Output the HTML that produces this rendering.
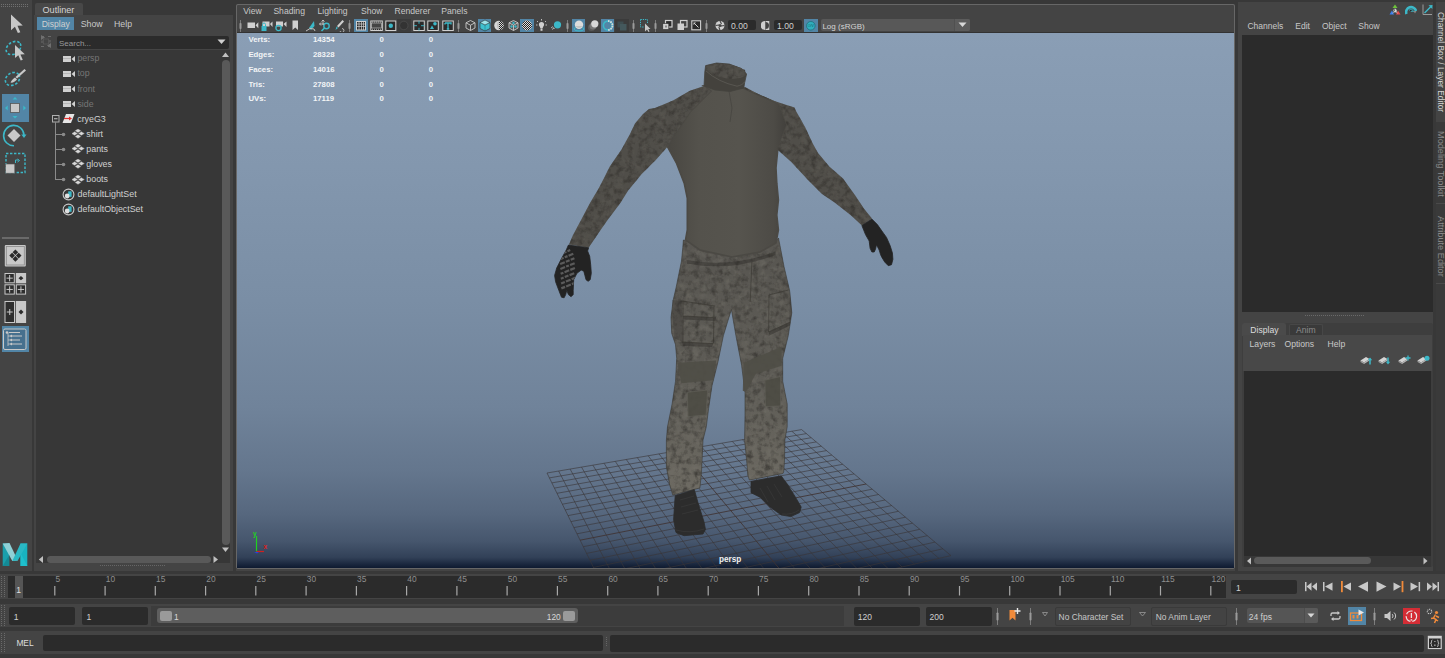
<!DOCTYPE html>
<html><head><meta charset="utf-8">
<style>
*{margin:0;padding:0;box-sizing:border-box}
html,body{width:1445px;height:658px;overflow:hidden;background:#444;font-family:"Liberation Sans",sans-serif;font-size:9px;color:#c8c8c8;position:relative}
.a{position:absolute}
.t{position:absolute;white-space:nowrap;line-height:1}
</style></head><body>
<div class="a" style="left:0px;top:0px;width:32px;height:571px;background:#444;"></div>
<div class="a" style="left:32px;top:0px;width:2px;height:574px;background:#383838;"></div>
<svg class="a" style="left:0px;top:3px;" width="32" height="6" viewBox="0 0 32 6"><rect x="1" y="1" width="1" height="1" fill="#707070"/><rect x="3" y="1" width="1" height="1" fill="#707070"/><rect x="5" y="1" width="1" height="1" fill="#707070"/><rect x="7" y="1" width="1" height="1" fill="#707070"/><rect x="9" y="1" width="1" height="1" fill="#707070"/><rect x="11" y="1" width="1" height="1" fill="#707070"/><rect x="13" y="1" width="1" height="1" fill="#707070"/><rect x="15" y="1" width="1" height="1" fill="#707070"/><rect x="17" y="1" width="1" height="1" fill="#707070"/><rect x="19" y="1" width="1" height="1" fill="#707070"/><rect x="21" y="1" width="1" height="1" fill="#707070"/><rect x="23" y="1" width="1" height="1" fill="#707070"/><rect x="25" y="1" width="1" height="1" fill="#707070"/><rect x="27" y="1" width="1" height="1" fill="#707070"/><rect x="1" y="3" width="1" height="1" fill="#707070"/><rect x="3" y="3" width="1" height="1" fill="#707070"/><rect x="5" y="3" width="1" height="1" fill="#707070"/><rect x="7" y="3" width="1" height="1" fill="#707070"/><rect x="9" y="3" width="1" height="1" fill="#707070"/><rect x="11" y="3" width="1" height="1" fill="#707070"/><rect x="13" y="3" width="1" height="1" fill="#707070"/><rect x="15" y="3" width="1" height="1" fill="#707070"/><rect x="17" y="3" width="1" height="1" fill="#707070"/><rect x="19" y="3" width="1" height="1" fill="#707070"/><rect x="21" y="3" width="1" height="1" fill="#707070"/><rect x="23" y="3" width="1" height="1" fill="#707070"/><rect x="25" y="3" width="1" height="1" fill="#707070"/><rect x="27" y="3" width="1" height="1" fill="#707070"/></svg>
<svg class="a" style="left:0px;top:10px;" width="32" height="28" viewBox="0 0 32 28"><path transform="translate(11,4.5) scale(0.98)" d="M0 0 L0 16 L4 12.5 L7 19 L9.5 18 L6.6 11.6 L12 11.2 Z" fill="#c8c8c8"/></svg>
<svg class="a" style="left:0px;top:38px;" width="32" height="28" viewBox="0 0 32 28"><ellipse cx="13.5" cy="10" rx="8" ry="5.8" transform="rotate(-35 13.5 10)" fill="none" stroke="#3cb8c8" stroke-width="1.6" stroke-dasharray="2.6 1.8"/><path transform="translate(15,7) scale(0.82)" d="M0 0 L0 16 L4 12.5 L7 19 L9.5 18 L6.6 11.6 L12 11.2 Z" fill="#c8c8c8"/></svg>
<svg class="a" style="left:0px;top:66px;" width="32" height="28" viewBox="0 0 32 28"><ellipse cx="12.5" cy="13" rx="7.6" ry="6" transform="rotate(-35 12.5 13)" fill="none" stroke="#3cb8c8" stroke-width="1.6" stroke-dasharray="2.6 1.8"/><path d="M24.5 3 L26 4.5 L17 12.5 L15.5 11 Z" fill="#c8c8c8"/><path d="M15 11.5 L17 13.5 C15 16 12.5 17 10.5 16.5 C11.5 14.5 13 12.5 15 11.5 Z" fill="#c8c8c8"/></svg>
<div class="a" style="left:2px;top:94px;width:27px;height:27.5px;background:#5285a6;"></div>
<svg class="a" style="left:0px;top:94px;" width="32" height="28" viewBox="0 0 32 28"><rect x="10.5" y="9.4" width="9" height="9" fill="#c8c8c8" stroke="#555" stroke-width="0.8"/><path d="M15 3 L17.5 5.6 L12.5 5.6Z M15 24.5 L17.5 22 L12.5 22Z M5 14 L7.7 11.5 L7.7 16.5Z M26 14 L23.3 11.5 L23.3 16.5Z" fill="#3cb8c8"/></svg>
<svg class="a" style="left:0px;top:122px;" width="32" height="28" viewBox="0 0 32 28"><path d="M24 13 A10.2 10.2 0 1 0 14 23.8" fill="none" stroke="#3cb8c8" stroke-width="1.6"/><path d="M21.3 12.5 L26.5 12.5 L24 16Z" fill="#3cb8c8"/><path d="M14 7 L20.5 13.5 L14 20 L7.5 13.5Z" fill="#c8c8c8"/></svg>
<svg class="a" style="left:0px;top:150px;" width="32" height="28" viewBox="0 0 32 28"><rect x="6" y="3.5" width="19" height="19" fill="none" stroke="#3cb8c8" stroke-width="1.4" stroke-dasharray="2.4 1.6"/><rect x="5.6" y="14" width="9.2" height="9.2" fill="#c8c8c8" stroke="#555" stroke-width="0.6"/><path d="M15.5 13 L15.5 10 L18.5 10 M17.5 9 L19.5 10.5 L17.5 12" fill="none" stroke="#3cb8c8" stroke-width="1"/></svg>
<div class="a" style="left:2px;top:237px;width:27px;height:2px;background:#6a6a6a;"></div>
<svg class="a" style="left:0px;top:244px;" width="32" height="24" viewBox="0 0 32 24"><rect x="4.8" y="1" width="21" height="21.5" rx="1" fill="#c8c8c8"/><rect x="6.3" y="2.5" width="18" height="18.5" fill="none" stroke="#888" stroke-width="0.8"/><path d="M15.4 5.5 L18.2 8.3 L15.4 11.1 L12.6 8.3Z M15.4 12.1 L18.2 14.9 L15.4 17.7 L12.6 14.9Z M12.1 8.8 L14.9 11.6 L12.1 14.4 L9.3 11.6Z M18.7 8.8 L21.5 11.6 L18.7 14.4 L15.9 11.6Z" fill="#2b2b2b"/></svg>
<svg class="a" style="left:0px;top:273px;" width="32" height="23" viewBox="0 0 32 23"><rect x="5.0" y="0.5" width="9.3" height="9.3" fill="#2e2e2e" stroke="#c8c8c8" stroke-width="1"/><path d="M9.65 2 V8.3 M6.5 5.15 H12.8" stroke="#c8c8c8" stroke-width="1"/><rect x="15.8" y="0" width="10.3" height="10.3" fill="#c8c8c8"/><path d="M20.950000000000003 3 L23.4 5.15 L20.950000000000003 7.3 L18.5 5.15Z" fill="#2b2b2b"/><rect x="5.0" y="11.8" width="9.3" height="9.3" fill="#2e2e2e" stroke="#c8c8c8" stroke-width="1"/><path d="M9.65 13.3 V19.6 M6.5 16.450000000000003 H12.8" stroke="#c8c8c8" stroke-width="1"/><rect x="16.3" y="11.8" width="9.3" height="9.3" fill="#2e2e2e" stroke="#c8c8c8" stroke-width="1"/><path d="M20.950000000000003 13.3 V19.6 M17.8 16.450000000000003 H24.1" stroke="#c8c8c8" stroke-width="1"/></svg>
<svg class="a" style="left:0px;top:301px;" width="32" height="23" viewBox="0 0 32 23"><rect x="5" y="0.5" width="9.5" height="21" fill="#2e2e2e" stroke="#c8c8c8" stroke-width="1"/><path d="M9.75 8 V14 M6.8 11 H12.7" stroke="#c8c8c8" stroke-width="1"/><rect x="15.8" y="0" width="10.3" height="22" fill="#c8c8c8"/><path d="M21 8.5 L23.5 11 L21 13.5 L18.5 11Z" fill="#2b2b2b"/></svg>
<div class="a" style="left:1.6px;top:326px;width:27px;height:25.5px;background:#5285a6;"></div>
<svg class="a" style="left:0px;top:326px;" width="32" height="26" viewBox="0 0 32 26"><rect x="3.5" y="3" width="22.5" height="20.5" rx="1.5" fill="#46708e" stroke="#c8c8c8" stroke-width="1"/><path d="M8 6.5 V20 M8 10 H11 M8 14 H11 M8 18 H11" stroke="#c8c8c8" stroke-width="0.8"/><circle cx="7" cy="6.5" r="1.3" fill="#c8c8c8"/><circle cx="11.5" cy="10" r="1.2" fill="#c8c8c8"/><circle cx="11.5" cy="14" r="1.2" fill="#c8c8c8"/><circle cx="11.5" cy="18" r="1.2" fill="#c8c8c8"/><path d="M9 6.5 H20 M13 10 H22 M13 14 H20 M13 18 H22" stroke="#c8c8c8" stroke-width="1.2"/></svg>
<svg class="a" style="left:0px;top:543px;" width="32" height="24" viewBox="0 0 32 24"><path d="M2.7 0.5 L9.2 0.5 L9.2 23 L2.7 23Z" fill="#1a9fab"/><path d="M2.7 0.5 L9.5 0 L17.8 17.5 L12.3 18 Z" fill="#8fd0d6"/><path d="M20.5 0.5 L27.3 0.5 L27.3 23 L20.5 23Z" fill="#18b3c0"/><path d="M27.3 0.5 L20.5 0.5 L12.3 18 L17.8 17.5Z" fill="#2ab8c4"/><path d="M2.7 23 L9.2 12 L9.2 23Z" fill="#148a95"/><path d="M27.3 23 L20.5 23 L20.5 10 Z" fill="#1fc0cc"/></svg>
<div class="a" style="left:34px;top:0px;width:199px;height:15px;background:#383838;"></div>
<div class="a" style="left:35px;top:3px;width:48px;height:12px;background:#484848;border-radius:2px 2px 0 0"></div>
<div class="t" style="left:42.5px;top:6.30px;font-size:9.1px;color:#d4d4d4;font-weight:normal;">Outliner</div>
<div class="a" style="left:34px;top:15px;width:199px;height:556px;background:#444;"></div>
<div class="a" style="left:37px;top:16.5px;width:37px;height:13.2px;background:#5285a6;"></div>
<div class="t" style="left:41.7px;top:19.76px;font-size:8.55px;color:#d0d0d0;font-weight:normal;">Display</div>
<div class="t" style="left:80.7px;top:19.55px;font-size:8.8px;color:#c8c8c8;font-weight:normal;">Show</div>
<div class="t" style="left:114px;top:19.59px;font-size:8.75px;color:#c8c8c8;font-weight:normal;">Help</div>
<svg class="a" style="left:39px;top:34px;" width="14" height="15" viewBox="0 0 14 15"><path d="M2 2.5 H5 M2 12.5 H5 M9 2.5 H12 M9 12.5 H12" stroke="#6a6a6a" stroke-width="1"/><path d="M2 1 L6 3.5 L2 6Z M12 9 L8 11.5 L12 14Z" fill="#6f6f6f"/><path d="M3 6.5 V9 M11 6 V8.5" stroke="#6a6a6a" stroke-width="1"/><rect x="4.5" y="5" width="5" height="5" fill="none" stroke="#5a5a5a" stroke-width="0.8"/></svg>
<div class="a" style="left:57px;top:35.5px;width:172px;height:13.4px;background:#2b2b2b;border-radius:2px"></div>
<div class="t" style="left:59px;top:39.53px;font-size:8.0px;color:#9a9a9a;font-weight:normal;">Search...</div>
<svg class="a" style="left:217px;top:39px;" width="9" height="6" viewBox="0 0 9 6"><path d="M0.5 0.5 L8.5 0.5 L4.5 5Z" fill="#d0d0d0"/></svg>
<div class="a" style="left:36px;top:50.3px;width:193.5px;height:512.5px;background:#373737;"></div>
<svg class="a" style="left:221px;top:51px;" width="10" height="8" viewBox="0 0 10 8"><path d="M1 6 L4.5 1.5 L8 6Z" fill="#c0c0c0"/></svg>
<div class="a" style="left:222px;top:60px;width:8px;height:484.5px;background:#595959;border-radius:4px"></div>
<svg class="a" style="left:221px;top:546px;" width="10" height="8" viewBox="0 0 10 8"><path d="M1 1.5 L8 1.5 L4.5 6Z" fill="#c0c0c0"/></svg>
<svg class="a" style="left:37px;top:555px;" width="8" height="9" viewBox="0 0 8 9"><path d="M6 1 L6 8 L1.8 4.5Z" fill="#c0c0c0"/></svg>
<div class="a" style="left:46.5px;top:556px;width:164.5px;height:7.3px;background:#595959;border-radius:4px"></div>
<svg class="a" style="left:212px;top:555px;" width="8" height="9" viewBox="0 0 8 9"><path d="M1.5 1 L1.5 8 L6 4.5Z" fill="#c0c0c0"/></svg>
<svg class="a" style="left:100px;top:565px;" width="66" height="2" viewBox="0 0 66 2"><rect x="0" y="0" width="1" height="1" fill="#666"/><rect x="2" y="0" width="1" height="1" fill="#666"/><rect x="4" y="0" width="1" height="1" fill="#666"/><rect x="6" y="0" width="1" height="1" fill="#666"/><rect x="8" y="0" width="1" height="1" fill="#666"/><rect x="10" y="0" width="1" height="1" fill="#666"/><rect x="12" y="0" width="1" height="1" fill="#666"/><rect x="14" y="0" width="1" height="1" fill="#666"/><rect x="16" y="0" width="1" height="1" fill="#666"/><rect x="18" y="0" width="1" height="1" fill="#666"/><rect x="20" y="0" width="1" height="1" fill="#666"/><rect x="22" y="0" width="1" height="1" fill="#666"/><rect x="24" y="0" width="1" height="1" fill="#666"/><rect x="26" y="0" width="1" height="1" fill="#666"/><rect x="28" y="0" width="1" height="1" fill="#666"/><rect x="30" y="0" width="1" height="1" fill="#666"/><rect x="32" y="0" width="1" height="1" fill="#666"/><rect x="34" y="0" width="1" height="1" fill="#666"/><rect x="36" y="0" width="1" height="1" fill="#666"/><rect x="38" y="0" width="1" height="1" fill="#666"/><rect x="40" y="0" width="1" height="1" fill="#666"/><rect x="42" y="0" width="1" height="1" fill="#666"/><rect x="44" y="0" width="1" height="1" fill="#666"/><rect x="46" y="0" width="1" height="1" fill="#666"/><rect x="48" y="0" width="1" height="1" fill="#666"/><rect x="50" y="0" width="1" height="1" fill="#666"/><rect x="52" y="0" width="1" height="1" fill="#666"/><rect x="54" y="0" width="1" height="1" fill="#666"/><rect x="56" y="0" width="1" height="1" fill="#666"/><rect x="58" y="0" width="1" height="1" fill="#666"/><rect x="60" y="0" width="1" height="1" fill="#666"/><rect x="62" y="0" width="1" height="1" fill="#666"/><rect x="64" y="0" width="1" height="1" fill="#666"/></svg>
<svg class="a" style="left:63px;top:54.5px;" width="13" height="8" viewBox="0 0 13 8"><rect x="0" y="1" width="8" height="6" fill="#d0d0d0"/><path d="M8.5 4 L12 1 L12 7Z" fill="#d0d0d0"/><path d="M0 3.5 H8" stroke="#9a9a9a" stroke-width="0.5"/></svg>
<div class="t" style="left:77.4px;top:54.35px;font-size:8.8px;color:#767676;font-weight:normal;">persp</div>
<svg class="a" style="left:63px;top:69.6px;" width="13" height="8" viewBox="0 0 13 8"><rect x="0" y="1" width="8" height="6" fill="#d0d0d0"/><path d="M8.5 4 L12 1 L12 7Z" fill="#d0d0d0"/><path d="M0 3.5 H8" stroke="#9a9a9a" stroke-width="0.5"/></svg>
<div class="t" style="left:77.4px;top:69.45px;font-size:8.8px;color:#767676;font-weight:normal;">top</div>
<svg class="a" style="left:63px;top:84.7px;" width="13" height="8" viewBox="0 0 13 8"><rect x="0" y="1" width="8" height="6" fill="#d0d0d0"/><path d="M8.5 4 L12 1 L12 7Z" fill="#d0d0d0"/><path d="M0 3.5 H8" stroke="#9a9a9a" stroke-width="0.5"/></svg>
<div class="t" style="left:77.4px;top:84.55px;font-size:8.8px;color:#767676;font-weight:normal;">front</div>
<svg class="a" style="left:63px;top:99.8px;" width="13" height="8" viewBox="0 0 13 8"><rect x="0" y="1" width="8" height="6" fill="#d0d0d0"/><path d="M8.5 4 L12 1 L12 7Z" fill="#d0d0d0"/><path d="M0 3.5 H8" stroke="#9a9a9a" stroke-width="0.5"/></svg>
<div class="t" style="left:77.4px;top:99.65px;font-size:8.8px;color:#767676;font-weight:normal;">side</div>
<svg class="a" style="left:51px;top:114px;" width="9" height="9" viewBox="0 0 9 9"><rect x="1.5" y="1.5" width="6.5" height="6.5" fill="none" stroke="#b0b0b0" stroke-width="1"/><path d="M3 4.75 H6.5" stroke="#c8c8c8" stroke-width="1"/></svg>
<svg class="a" style="left:62px;top:113px;" width="13" height="11" viewBox="0 0 13 11"><path d="M4 1 L12.5 1 L9 10 L0.5 10Z" fill="#e6e6e6"/><path d="M2 5.5 H8" stroke="#e03030" stroke-width="1.2"/><path d="M7 3.5 L10 5.5 L7 7.5Z" fill="#e03030"/></svg>
<div class="t" style="left:77.2px;top:114.67px;font-size:8.9px;color:#d0d0d0;font-weight:normal;">cryeG3</div>
<div class="a" style="left:55px;top:122px;width:1px;height:57px;background:#8a8a8a;"></div>
<div class="a" style="left:55px;top:134px;width:8px;height:1px;background:#8a8a8a;"></div>
<svg class="a" style="left:61px;top:131.5px;" width="5" height="5" viewBox="0 0 5 5"><circle cx="2.5" cy="2.5" r="1.8" fill="#8a8a8a"/></svg>
<svg class="a" style="left:71.5px;top:129.2px;" width="13" height="10" viewBox="0 0 13 10"><path d="M6 -0.19999999999999996 L9.2 1.8 L6 3.8 L2.8 1.8Z" fill="#d8d8d8" stroke="#555" stroke-width="0.4"/><path d="M2.6 2.5999999999999996 L5.800000000000001 4.6 L2.6 6.6 L-0.6000000000000001 4.6Z" fill="#d8d8d8" stroke="#555" stroke-width="0.4"/><path d="M9.4 2.5999999999999996 L12.600000000000001 4.6 L9.4 6.6 L6.2 4.6Z" fill="#d8d8d8" stroke="#555" stroke-width="0.4"/><path d="M6 5.4 L9.2 7.4 L6 9.4 L2.8 7.4Z" fill="#d8d8d8" stroke="#555" stroke-width="0.4"/></svg>
<div class="t" style="left:86.3px;top:129.77px;font-size:8.9px;color:#d0d0d0;font-weight:normal;">shirt</div>
<div class="a" style="left:55px;top:149px;width:8px;height:1px;background:#8a8a8a;"></div>
<svg class="a" style="left:61px;top:146.6px;" width="5" height="5" viewBox="0 0 5 5"><circle cx="2.5" cy="2.5" r="1.8" fill="#8a8a8a"/></svg>
<svg class="a" style="left:71.5px;top:144.29999999999998px;" width="13" height="10" viewBox="0 0 13 10"><path d="M6 -0.19999999999999996 L9.2 1.8 L6 3.8 L2.8 1.8Z" fill="#d8d8d8" stroke="#555" stroke-width="0.4"/><path d="M2.6 2.5999999999999996 L5.800000000000001 4.6 L2.6 6.6 L-0.6000000000000001 4.6Z" fill="#d8d8d8" stroke="#555" stroke-width="0.4"/><path d="M9.4 2.5999999999999996 L12.600000000000001 4.6 L9.4 6.6 L6.2 4.6Z" fill="#d8d8d8" stroke="#555" stroke-width="0.4"/><path d="M6 5.4 L9.2 7.4 L6 9.4 L2.8 7.4Z" fill="#d8d8d8" stroke="#555" stroke-width="0.4"/></svg>
<div class="t" style="left:86.3px;top:144.87px;font-size:8.9px;color:#d0d0d0;font-weight:normal;">pants</div>
<div class="a" style="left:55px;top:164px;width:8px;height:1px;background:#8a8a8a;"></div>
<svg class="a" style="left:61px;top:161.7px;" width="5" height="5" viewBox="0 0 5 5"><circle cx="2.5" cy="2.5" r="1.8" fill="#8a8a8a"/></svg>
<svg class="a" style="left:71.5px;top:159.39999999999998px;" width="13" height="10" viewBox="0 0 13 10"><path d="M6 -0.19999999999999996 L9.2 1.8 L6 3.8 L2.8 1.8Z" fill="#d8d8d8" stroke="#555" stroke-width="0.4"/><path d="M2.6 2.5999999999999996 L5.800000000000001 4.6 L2.6 6.6 L-0.6000000000000001 4.6Z" fill="#d8d8d8" stroke="#555" stroke-width="0.4"/><path d="M9.4 2.5999999999999996 L12.600000000000001 4.6 L9.4 6.6 L6.2 4.6Z" fill="#d8d8d8" stroke="#555" stroke-width="0.4"/><path d="M6 5.4 L9.2 7.4 L6 9.4 L2.8 7.4Z" fill="#d8d8d8" stroke="#555" stroke-width="0.4"/></svg>
<div class="t" style="left:86.3px;top:159.97px;font-size:8.9px;color:#d0d0d0;font-weight:normal;">gloves</div>
<div class="a" style="left:55px;top:179px;width:8px;height:1px;background:#8a8a8a;"></div>
<svg class="a" style="left:61px;top:176.8px;" width="5" height="5" viewBox="0 0 5 5"><circle cx="2.5" cy="2.5" r="1.8" fill="#8a8a8a"/></svg>
<svg class="a" style="left:71.5px;top:174.5px;" width="13" height="10" viewBox="0 0 13 10"><path d="M6 -0.19999999999999996 L9.2 1.8 L6 3.8 L2.8 1.8Z" fill="#d8d8d8" stroke="#555" stroke-width="0.4"/><path d="M2.6 2.5999999999999996 L5.800000000000001 4.6 L2.6 6.6 L-0.6000000000000001 4.6Z" fill="#d8d8d8" stroke="#555" stroke-width="0.4"/><path d="M9.4 2.5999999999999996 L12.600000000000001 4.6 L9.4 6.6 L6.2 4.6Z" fill="#d8d8d8" stroke="#555" stroke-width="0.4"/><path d="M6 5.4 L9.2 7.4 L6 9.4 L2.8 7.4Z" fill="#d8d8d8" stroke="#555" stroke-width="0.4"/></svg>
<div class="t" style="left:86.3px;top:175.07px;font-size:8.9px;color:#d0d0d0;font-weight:normal;">boots</div>
<svg class="a" style="left:62px;top:187.9px;" width="13" height="13" viewBox="0 0 13 13"><circle cx="6.5" cy="6.5" r="5.4" fill="none" stroke="#c8c8c8" stroke-width="1.1"/><path d="M6.2 3.3 H9.6 V8.8 H6.2Z" fill="#3ab8c8"/><circle cx="5.2" cy="8" r="2.4" fill="#e0e0e0"/></svg>
<div class="t" style="left:77.6px;top:190.20px;font-size:8.86px;color:#d0d0d0;font-weight:normal;">defaultLightSet</div>
<svg class="a" style="left:62px;top:203.0px;" width="13" height="13" viewBox="0 0 13 13"><circle cx="6.5" cy="6.5" r="5.4" fill="none" stroke="#c8c8c8" stroke-width="1.1"/><path d="M6.2 3.3 H9.6 V8.8 H6.2Z" fill="#3ab8c8"/><circle cx="5.2" cy="8" r="2.4" fill="#e0e0e0"/></svg>
<div class="t" style="left:77.6px;top:205.30px;font-size:8.86px;color:#d0d0d0;font-weight:normal;">defaultObjectSet</div>
<div class="a" style="left:233px;top:0px;width:3px;height:574px;background:#383838;"></div>
<div class="a" style="left:236px;top:0px;width:999px;height:3.5px;background:#383838;"></div>
<div class="a" style="left:236px;top:3.5px;width:999px;height:565px;background:#444;border:1px solid #676767;border-radius:2px"></div>
<div class="a" style="left:237px;top:31.8px;width:997px;height:1.2px;background:#333;"></div>
<div class="a" id="vp" style="left:237px;top:33px;width:997px;height:535px;background:linear-gradient(to bottom,rgb(138,158,181) 0%,rgb(131,151,174) 25%,rgb(122,142,165) 50%,rgb(112,131,154) 70%,rgb(100,118,141) 82%,rgb(86,103,126) 90%,rgb(70,86,109) 95%,rgb(50,65,88) 98%,rgb(14,26,48) 100%)"></div><svg class="a" style="left:0;top:0" width="1445" height="658" viewBox="0 0 1445 658">
<defs>
<clipPath id="vpc"><rect x="237" y="33" width="997" height="535"/></clipPath>
<filter id="camoP" x="-5%" y="-5%" width="110%" height="110%" color-interpolation-filters="sRGB">
 <feTurbulence type="fractalNoise" baseFrequency="0.17" numOctaves="3" seed="3" result="n1"/>
 <feColorMatrix in="n1" type="matrix" values="0 0 0 0 0.23  0 0 0 0 0.222  0 0 0 0 0.206  2.0 0 0 0 -0.88" result="dark"/>
 <feComposite in="dark" in2="SourceAlpha" operator="in" result="darkc"/>
 <feTurbulence type="fractalNoise" baseFrequency="0.12" numOctaves="3" seed="11" result="n2"/>
 <feColorMatrix in="n2" type="matrix" values="0 0 0 0 0.46  0 0 0 0 0.45  0 0 0 0 0.42  1.1 0 0 0 -0.5" result="light"/>
 <feComposite in="light" in2="SourceAlpha" operator="in" result="lightc"/>
 <feMerge><feMergeNode in="SourceGraphic"/><feMergeNode in="darkc"/><feMergeNode in="lightc"/></feMerge>
</filter>
<filter id="camoS" x="-5%" y="-5%" width="110%" height="110%" color-interpolation-filters="sRGB">
 <feTurbulence type="fractalNoise" baseFrequency="0.18" numOctaves="3" seed="5" result="n1"/>
 <feColorMatrix in="n1" type="matrix" values="0 0 0 0 0.20  0 0 0 0 0.19  0 0 0 0 0.175  1.7 0 0 0 -0.72" result="dark"/>
 <feComposite in="dark" in2="SourceAlpha" operator="in" result="darkc"/>
 <feTurbulence type="fractalNoise" baseFrequency="0.12" numOctaves="3" seed="17" result="n2"/>
 <feColorMatrix in="n2" type="matrix" values="0 0 0 0 0.40  0 0 0 0 0.39  0 0 0 0 0.36  0.9 0 0 0 -0.42" result="light"/>
 <feComposite in="light" in2="SourceAlpha" operator="in" result="lightc"/>
 <feMerge><feMergeNode in="SourceGraphic"/><feMergeNode in="darkc"/><feMergeNode in="lightc"/></feMerge>
</filter>
<linearGradient id="torsoG" x1="670" y1="0" x2="785" y2="0" gradientUnits="userSpaceOnUse">
 <stop offset="0" stop-color="#494742"/><stop offset="0.25" stop-color="#54524c"/><stop offset="0.6" stop-color="#56544e"/><stop offset="0.9" stop-color="#4d4b46"/><stop offset="1" stop-color="#43413d"/>
</linearGradient>
<linearGradient id="legG" x1="0" y1="250" x2="0" y2="495" gradientUnits="userSpaceOnUse">
 <stop offset="0" stop-color="#585651"/><stop offset="0.55" stop-color="#5e5c56"/><stop offset="1" stop-color="#6d6a62"/>
</linearGradient>
</defs>
<g clip-path="url(#vpc)">
<path d="M801.6 429.6L950.9 555.6M801.6 429.6L547.0 473.0M791.9 431.3L938.9 558.4M806.4 433.6L549.4 477.9M782.1 432.9L926.7 561.2M811.2 437.7L551.9 482.9M772.3 434.6L914.5 564.1M816.2 441.9L554.4 488.1M762.4 436.3L902.1 567.0M821.3 446.2L557.0 493.3M752.4 438.0L889.5 569.9M826.5 450.6L559.7 498.7M742.3 439.7L876.9 572.8M831.8 455.1L562.4 504.2M732.2 441.4L864.1 575.8M837.2 459.6L565.2 509.9M722.0 443.2L851.2 578.8M842.7 464.3L568.0 515.6M711.7 444.9L838.2 581.9M848.4 469.1L570.9 521.6M701.3 446.7L825.0 584.9M854.1 473.9L573.9 527.6M690.8 448.5L811.7 588.0M860.0 478.9L577.0 533.8M669.7 452.1L784.6 594.3M872.2 489.2L583.3 546.7M659.0 453.9L770.9 597.5M878.6 494.5L586.6 553.4M648.2 455.8L757.0 600.8M885.0 500.0L590.0 560.3M637.3 457.6L743.0 604.0M891.6 505.6L593.5 567.4M626.3 459.5L728.8 607.3M898.4 511.3L597.1 574.6M615.3 461.4L714.5 610.7M905.4 517.2L600.7 582.1M604.1 463.3L700.0 614.0M912.5 523.2L604.5 589.8M592.9 465.2L685.3 617.5M919.8 529.3L608.4 597.6M581.5 467.1L670.5 620.9M927.3 535.7L612.4 605.7M570.1 469.1L655.5 624.4M934.9 542.1L616.5 614.1M558.6 471.0L640.4 627.9M942.8 548.8L620.7 622.7M547.0 473.0L625.1 631.5M950.9 555.6L625.1 631.5" stroke="#3a3436" stroke-width="0.85" fill="none" opacity="0.72"/>
<path d="M680.3 450.3L798.2 591.2M866.1 484.0L580.1 540.2" stroke="#3f3331" stroke-width="1" fill="none" opacity="0.85"/>
<path d="M683.4,240.0 700.0,246.0 731.8,253.4 760.0,249.0 775.3,241.7 778.5,238.0 784.0,266.5 789.5,290.0 791.8,312.8 788.3,335.6 782.7,358.4 782.7,381.2 787.2,404.0 787.2,426.8 784.9,440.0 784.5,460.7 783.7,472.0 782.9,473.5 749.4,480.0 747.8,475.0 747.0,464.0 744.6,440.0 745.0,415.4 745.0,392.6 741.6,365.2 735.9,335.6 731.4,309.4 723.4,335.6 717.7,363.0 712.0,385.7 708.6,408.5 706.3,426.8 703.0,440.0 701.5,472.0 699.9,487.9 672.8,495.0 669.6,484.7 666.4,467.0 666.4,440.0 667.5,426.8 672.1,404.0 675.5,381.2 676.7,358.4 675.5,344.7 671.7,333.3 671.0,317.4 673.2,300.0 676.0,288.0 681.5,261.0 682.8,247.4Z" fill="url(#legG)" filter="url(#camoP)"/>
<path d="M683.4,240.0 700.0,246.0 731.8,253.4 760.0,249.0 775.3,241.7 778.5,238.0 784.0,266.5 789.5,290.0 791.8,312.8 788.3,335.6 782.7,358.4 782.7,381.2 787.2,404.0 787.2,426.8 784.9,440.0 784.5,460.7 783.7,472.0 782.9,473.5 749.4,480.0 747.8,475.0 747.0,464.0 744.6,440.0 745.0,415.4 745.0,392.6 741.6,365.2 735.9,335.6 731.4,309.4 723.4,335.6 717.7,363.0 712.0,385.7 708.6,408.5 706.3,426.8 703.0,440.0 701.5,472.0 699.9,487.9 672.8,495.0 669.6,484.7 666.4,467.0 666.4,440.0 667.5,426.8 672.1,404.0 675.5,381.2 676.7,358.4 675.5,344.7 671.7,333.3 671.0,317.4 673.2,300.0 676.0,288.0 681.5,261.0 682.8,247.4Z" fill="none" stroke="#3a3834" stroke-width="1" opacity="0.6"/>
<g fill="#2e2c29" opacity="0.45">
 <path d="M683 316 L716 317.7 L715.5 321 L683.5 319.5Z"/>
 <path d="M681.7 342 L713.5 343.6 L712 347 L683 346Z"/>
 <path d="M768.6 332 L790.3 322 L790 325.5 L769.5 335.5Z"/>
 <path d="M686.7 260 Q731 268 775.3 251.7 L775.6 255 Q731 272 687 263.5Z"/>
 <path d="M672 300 L681.7 301 L683 342 L674 338 Z" opacity="0.6"/>
 <path d="M790.5 290 L791.8 312.8 L789 325 Z" opacity="0.6"/>
</g>
<g fill="none" stroke="#34322d" stroke-width="0.9" opacity="0.6">
 <path d="M681.7 301 L715.1 306 M683.4 316 L716 317.7 M681.7 342 L713.5 343.6 M683 301 L683 342 M714 306 L713.5 343"/>
 <path d="M768.6 295 L788.6 290 M768.6 332 L790.3 322 M769 295 L768.6 332"/>
 <path d="M751.9 262 L750.2 301.8"/>
</g>
<path d="M677.5,362.7 716.2,360.4 713.2,380.2 681.3,383.2Z" fill="#4f4e46" opacity="0.92"/>
<path d="M743.6,362.7 781.6,346.7 781.6,365.7 755.7,374.0 746.0,392.0 742.8,390.8Z" fill="#4f4e46" opacity="0.92"/>
<path d="M687.4,392.3 707.6,390.0 706.1,415.1 688.0,416.6Z" fill="#4d4c44" stroke="#5e5d55" stroke-width="0.8" opacity="0.9"/>
<path d="M764.9,380.2 780.5,376.5 780.5,406.0 765.5,406.5Z" fill="#4d4c44" stroke="#5e5d55" stroke-width="0.8" opacity="0.9"/>
<path d="M675.2,495.8 694.3,489.5 698.3,503.8 703.9,521.4 705.5,529.4 703.0,534.0 684.0,535.7 676.0,532.5 673.6,519.8 674.4,507.0Z" fill="#2c2c2c" stroke="#2c2c2c" stroke-width="0.8"/>
<path d="M751.0,481.5 781.3,476.0 787.7,484.7 795.6,497.4 801.2,507.0 799.6,512.6 790.8,516.6 781.3,515.0 770.0,507.0 760.5,497.4 751.0,492.7Z" fill="#2c2c2c" stroke="#2c2c2c" stroke-width="0.8"/>
<g fill="none" stroke="#444" stroke-width="0.9" opacity="0.45">
 <path d="M676 530 Q690 534 704 529"/><path d="M680 500 L694 496 M681 507 L696 503 M682 514 L698 510"/>
 <path d="M782 514 Q792 515 799 510"/><path d="M760 488 L768 502 M767 486 L775 500 M774 484 L782 497"/>
</g>
<path d="M704.0,86.0 711.0,91.0 690.0,112.0 671.0,140.0 667.5,146.7 676.6,163.4 684.2,183.2 687.3,198.4 687.3,230.0 685.5,240.0 700.0,250.0 732.0,257.0 760.0,252.0 776.0,243.0 778.4,230.0 776.8,215.0 778.4,200.0 776.8,183.2 776.0,168.0 777.6,151.3 781.0,140.0 787.0,125.0 779.0,104.0 742.8,88.0 743.8,88.0Z" fill="url(#torsoG)" stroke="#4b4944" stroke-width="1.6"/>
<path d="M711.0,91.0 704.0,86.0 690.0,90.7 673.0,100.6 655.0,108.0 649.0,109.0 643.0,114.0 635.0,123.4 630.0,134.0 621.5,149.5 609.8,166.5 599.1,187.8 590.0,203.0 580.0,222.0 573.0,235.0 569.0,244.5 588.6,247.8 600.6,230.0 606.7,221.2 620.4,203.0 628.0,190.8 641.7,174.0 655.3,160.4 667.5,146.7 671.0,140.0 690.0,112.0Z" fill="#504e49" filter="url(#camoS)"/>
<path d="M742.8,88.0 745.0,87.0 758.0,94.0 773.0,100.6 785.0,104.4 794.5,107.4 796.0,111.0 805.0,127.0 813.0,144.0 818.0,153.0 829.3,166.5 843.0,178.6 855.1,195.3 864.2,209.0 872.0,218.5 861.9,225.5 850.5,215.1 835.3,203.0 821.7,193.8 808.0,180.0 791.3,161.9 777.6,149.8 781.0,140.0 787.0,125.0 779.0,104.0Z" fill="#504e49" filter="url(#camoS)"/>
<path d="M705.6,65.6 716.6,63.0 729.5,64.1 741.7,68.7 746.6,74.0 744.7,82.4 743.8,88.0 730.0,91.5 715.0,90.0 704.0,86.0 704.8,72.0Z" fill="#44423d" stroke="#44423d" stroke-width="0.8"/><path d="M706 66 Q725 60 745 70 L746 76 Q730 84 706 71Z" fill="#504e49" filter="url(#camoS)"/>
<path d="M706 71 Q718 82 737 86.2 Q743 85 744.7 81.6" fill="none" stroke="#5a5852" stroke-width="0.9"/>
<path d="M729 91 L732 108 L730 122" fill="none" stroke="#45433e" stroke-width="1" opacity="0.7"/>
<path d="M568.4,245.1 588.6,247.8 587.6,251.0 589.7,256.3 590.7,264.8 591.3,273.3 590.2,279.7 588.1,281.3 586.0,279.7 584.9,275.4 583.8,271.2 581.2,270.1 576.9,273.3 573.7,279.7 573.2,290.3 573.2,294.6 571.1,296.7 568.4,294.6 566.8,290.3 565.7,294.6 564.1,297.8 561.5,297.2 558.8,290.3 555.6,281.8 554.6,275.4 556.7,268.0 561.0,259.5 566.3,249.9Z" fill="#232323" stroke="#232323" stroke-width="0.8"/>
<clipPath id="lgc"><path d="M568.4,245.1 588.6,247.8 587.6,251.0 589.7,256.3 590.7,264.8 591.3,273.3 590.2,279.7 588.1,281.3 586.0,279.7 584.9,275.4 583.8,271.2 581.2,270.1 576.9,273.3 573.7,279.7 573.2,290.3 573.2,294.6 571.1,296.7 568.4,294.6 566.8,290.3 565.7,294.6 564.1,297.8 561.5,297.2 558.8,290.3 555.6,281.8 554.6,275.4 556.7,268.0 561.0,259.5 566.3,249.9Z"/></clipPath>
<g fill="#6a6a6a" opacity="0.8" clip-path="url(#lgc)"><g transform="rotate(-22 566 270)"><rect x="566.0" y="252.0" width="3" height="2.2"/><rect x="570.2" y="252.0" width="3" height="2.2"/><rect x="574.4" y="252.0" width="3" height="2.2"/><rect x="564.4" y="256.6" width="4" height="2.2"/><rect x="569.6" y="256.6" width="3" height="2.2"/><rect x="573.8" y="256.6" width="5" height="2.2"/><rect x="562.8" y="261.2" width="5" height="2.2"/><rect x="569.0" y="261.2" width="4" height="2.2"/><rect x="574.2" y="261.2" width="4" height="2.2"/><rect x="561.2" y="265.8" width="5" height="2.2"/><rect x="567.4" y="265.8" width="3" height="2.2"/><rect x="571.6" y="265.8" width="5" height="2.2"/><rect x="559.6" y="270.4" width="3" height="2.2"/><rect x="563.8" y="270.4" width="5" height="2.2"/><rect x="570.0" y="270.4" width="5" height="2.2"/><rect x="558.0" y="275.0" width="3" height="2.2"/><rect x="562.2" y="275.0" width="4" height="2.2"/><rect x="567.4" y="275.0" width="5" height="2.2"/><rect x="556.4" y="279.6" width="4" height="2.2"/><rect x="561.6" y="279.6" width="5" height="2.2"/><rect x="567.8" y="279.6" width="5" height="2.2"/><rect x="554.8" y="284.2" width="4" height="2.2"/><rect x="560.0" y="284.2" width="5" height="2.2"/><rect x="566.2" y="284.2" width="4" height="2.2"/></g></g>
<path d="M861.9,225.5 871.9,219.1 877.4,224.6 881.9,231.0 886.5,237.4 890.1,245.6 892.4,252.9 892.9,259.3 891.5,264.7 888.3,265.7 884.7,262.0 881.9,257.4 880.6,254.7 879.2,250.1 876.5,244.7 875.5,249.2 874.2,252.0 871.9,252.0 870.1,248.3 869.2,241.0 865.5,234.6 863.7,230.1Z" fill="#232323" stroke="#232323" stroke-width="0.8"/>
</g>
</svg>
<div class="t" style="left:243.3px;top:6.92px;font-size:8.6px;color:#c8c8c8;font-weight:normal;">View</div>
<div class="t" style="left:273.4px;top:6.92px;font-size:8.6px;color:#c8c8c8;font-weight:normal;">Shading</div>
<div class="t" style="left:317.5px;top:6.92px;font-size:8.6px;color:#c8c8c8;font-weight:normal;">Lighting</div>
<div class="t" style="left:361px;top:6.92px;font-size:8.6px;color:#c8c8c8;font-weight:normal;">Show</div>
<div class="t" style="left:394.5px;top:6.92px;font-size:8.6px;color:#c8c8c8;font-weight:normal;">Renderer</div>
<div class="t" style="left:441.3px;top:6.92px;font-size:8.6px;color:#c8c8c8;font-weight:normal;">Panels</div>
<svg class="a" style="left:238px;top:19.5px;" width="4" height="13" viewBox="0 0 4 13"><rect x="2" y="0" width="1" height="12" fill="#7c7c7c"/><rect x="1.5" y="3" width="2" height="6" rx="0.8" fill="#9a9a9a"/></svg>
<svg class="a" style="left:246.5px;top:19px;" width="14" height="13" viewBox="0 0 14 13"><rect x="0.5" y="3.5" width="7.5" height="5.5" fill="#d0d0d0"/><path d="M8.5 6.2 L11.3 3.3 L11.3 9.2Z" fill="#d0d0d0"/></svg>
<svg class="a" style="left:260.5px;top:19px;" width="14" height="13" viewBox="0 0 14 13"><rect x="1.5" y="2.5" width="7" height="5" fill="#d0d0d0"/><path d="M9 5 L11.5 2.5 L11.5 8Z" fill="#d0d0d0"/><rect x="0.5" y="7" width="5" height="5" fill="#3cb8c8"/><path d="M1.5 7 V5.5 A1.5 1.5 0 0 1 4.5 5.5 V7" fill="none" stroke="#3cb8c8" stroke-width="1"/></svg>
<svg class="a" style="left:275px;top:19px;" width="14" height="13" viewBox="0 0 14 13"><rect x="1" y="2.5" width="7" height="5" fill="#d0d0d0"/><path d="M8.5 5 L11.5 2.5 L11.5 8Z" fill="#d0d0d0"/><circle cx="3.5" cy="9" r="2.6" fill="none" stroke="#3cb8c8" stroke-width="1.4"/></svg>
<svg class="a" style="left:292px;top:19px;" width="14" height="13" viewBox="0 0 14 13"><path d="M0.5 1.5 H6 V11 L3.25 8.5 L0.5 11Z" fill="#d0d0d0"/></svg>
<svg class="a" style="left:305px;top:19px;" width="14" height="13" viewBox="0 0 14 13"><path d="M4 9 L9 2 L9.5 7 L6 11Z" fill="#3cb8c8"/><path d="M1 12 L5 9.5 L9 10 L10 12" fill="none" stroke="#c0c0c0" stroke-width="1"/></svg>
<svg class="a" style="left:318.5px;top:19px;" width="14" height="13" viewBox="0 0 14 13"><circle cx="7.5" cy="7" r="2.7" fill="none" stroke="#3cb8c8" stroke-width="1.4"/><path d="M5.5 9 L2.5 12" stroke="#3cb8c8" stroke-width="1.6"/><path d="M0.5 5 H5 M4 1.5 V6 M2 3.5 L0.5 5 L2 6.5 M2.5 2.5 L4 1 L5.5 2.5" fill="none" stroke="#c8c8c8" stroke-width="0.9"/></svg>
<svg class="a" style="left:334px;top:19px;" width="14" height="13" viewBox="0 0 14 13"><path d="M8.5 1 L10 2.5 L4.5 8.5 L3 7Z" fill="#d0d0d0"/><path d="M2.5 7.5 L4 9 L1.5 11Z" fill="#3cb8c8"/><path d="M6 12 A2 2 0 1 0 8 9.5" fill="none" stroke="#c0c0c0" stroke-width="0.9"/></svg>
<svg class="a" style="left:347px;top:19.5px;" width="4" height="13" viewBox="0 0 4 13"><rect x="2" y="0" width="1" height="12" fill="#7c7c7c"/><rect x="1.5" y="3" width="2" height="6" rx="0.8" fill="#9a9a9a"/></svg>
<div class="a" style="left:354.4px;top:19px;width:13.5px;height:13.1px;background:#5285a6;"></div>
<svg class="a" style="left:354.2px;top:19px;" width="14" height="13" viewBox="0 0 14 13"><rect x="2.5" y="2.5" width="9" height="8.5" fill="#2b2b2b" stroke="#d0d0d0" stroke-width="1"/><path d="M2.5 5 H11.5 M2.5 7.5 H11.5 M5 2.5 V11 M7.5 2.5 V11 M9.5 2.5 V11" stroke="#d0d0d0" stroke-width="0.7"/></svg>
<svg class="a" style="left:369.5px;top:19px;" width="14" height="13" viewBox="0 0 14 13"><rect x="0.8" y="2" width="11.5" height="9.5" fill="#2b2b2b" stroke="#d0d0d0" stroke-width="1"/><rect x="1.5" y="4" width="10" height="5" fill="#444" stroke="#d0d0d0" stroke-width="0.6"/><path d="M2 3 H11 M2 10.3 H11" stroke="#d0d0d0" stroke-width="0.7" stroke-dasharray="1 1"/></svg>
<svg class="a" style="left:384.5px;top:19px;" width="14" height="13" viewBox="0 0 14 13"><rect x="0.8" y="2" width="10" height="9.5" fill="#2b2b2b" stroke="#d0d0d0" stroke-width="1"/><circle cx="5.8" cy="6.7" r="2.2" fill="#3cb8c8"/></svg>
<div class="a" style="left:397px;top:19px;width:13.6px;height:13px;background:#3b3b3b;"></div>
<svg class="a" style="left:397px;top:19px;" width="14" height="13" viewBox="0 0 14 13"><circle cx="6.8" cy="6.5" r="3.6" fill="#333"/><circle cx="6.8" cy="6.5" r="4.3" fill="none" stroke="#4a4a4a" stroke-width="0.8"/></svg>
<svg class="a" style="left:413px;top:19px;" width="14" height="13" viewBox="0 0 14 13"><rect x="0.8" y="2" width="10.5" height="9.5" fill="#2b2b2b" stroke="#d0d0d0" stroke-width="1"/><path d="M6 2 V11.5 M0.8 6.7 H11.3" stroke="#3cb8c8" stroke-width="0.9"/><rect x="4" y="4.8" width="4" height="4" fill="#2b2b2b"/></svg>
<svg class="a" style="left:427px;top:19px;" width="14" height="13" viewBox="0 0 14 13"><rect x="0.8" y="2" width="10.5" height="9.5" fill="#2b2b2b" stroke="#d0d0d0" stroke-width="1"/><path d="M3 10 L5 6.5 L7 10Z" fill="#3cb8c8"/><circle cx="8" cy="4.8" r="1.8" fill="#3cb8c8"/></svg>
<svg class="a" style="left:442px;top:19px;" width="14" height="13" viewBox="0 0 14 13"><rect x="0.8" y="2" width="10.5" height="9.5" fill="#2b2b2b" stroke="#d0d0d0" stroke-width="1"/><path d="M3 4 H9 V5.5 M3 4 V5.5 M6 4 V10 M4.8 10 H7.2" fill="none" stroke="#3cb8c8" stroke-width="1.3"/></svg>
<svg class="a" style="left:456px;top:19.5px;" width="4" height="13" viewBox="0 0 4 13"><rect x="2" y="0" width="1" height="12" fill="#7c7c7c"/><rect x="1.5" y="3" width="2" height="6" rx="0.8" fill="#9a9a9a"/></svg>
<svg class="a" style="left:464.5px;top:19px;" width="14" height="13" viewBox="0 0 14 13"><path d="M5.5 1.5 L10 3.8 L10 9 L5.5 11.5 L1 9 L1 3.8Z M1 3.8 L5.5 6.2 L10 3.8 M5.5 6.2 V11.5" fill="none" stroke="#c8c8c8" stroke-width="0.9"/></svg>
<div class="a" style="left:477.5px;top:19px;width:13.5px;height:13.1px;background:#5285a6;"></div>
<svg class="a" style="left:478.5px;top:19px;" width="14" height="13" viewBox="0 0 14 13"><path d="M6 1 L11 3.5 L11 9.5 L6 12 L1 9.5 L1 3.5Z" fill="#3fc0cf"/><path d="M1 3.5 L6 6 L11 3.5 L6 1Z" fill="#9fe3ea"/><path d="M6 6 V12" stroke="#2a8d99" stroke-width="0.8"/><path d="M6 1 L11 3.5 L11 9.5 L6 12 L1 9.5 L1 3.5Z M1 3.5 L6 6 L11 3.5" fill="none" stroke="#2b2b2b" stroke-width="0.6"/></svg>
<svg class="a" style="left:494px;top:19px;" width="14" height="13" viewBox="0 0 14 13"><defs><pattern id="chk" width="2" height="2" patternUnits="userSpaceOnUse"><rect width="1" height="1" fill="#222"/><rect x="1" y="1" width="1" height="1" fill="#222"/></pattern></defs><circle cx="5" cy="6.5" r="4.8" fill="#d8d8d8"/><path d="M5 1.7 A4.8 4.8 0 0 1 5 11.3Z" fill="url(#chk)"/><path d="M5 1.7 A4.8 4.8 0 0 0 3 6.5 A4.8 4.8 0 0 0 5 11.3" fill="#aaa" opacity="0.5"/></svg>
<svg class="a" style="left:507.5px;top:19px;" width="14" height="13" viewBox="0 0 14 13"><path d="M5.5 1.5 L10 3.8 L10 9 L5.5 11.5 L1 9 L1 3.8Z" fill="#555" stroke="#c8c8c8" stroke-width="0.9"/><path d="M1 3.8 L5.5 6.2 L10 3.8 M5.5 6.2 V11.5" fill="none" stroke="#c8c8c8" stroke-width="0.9"/><circle cx="3.5" cy="7.5" r="1.2" fill="#3cb8c8"/><circle cx="7.5" cy="7.5" r="1.2" fill="#3cb8c8"/><circle cx="5.5" cy="4" r="1.2" fill="#3cb8c8"/></svg>
<div class="a" style="left:520.2px;top:19px;width:14.0px;height:13.1px;background:#5285a6;"></div>
<svg class="a" style="left:520.2px;top:19px;" width="14" height="13" viewBox="0 0 14 13"><circle cx="7" cy="6.5" r="5" fill="#e0e0e0"/><circle cx="7" cy="6.5" r="5" fill="url(#chk)"/></svg>
<svg class="a" style="left:536px;top:19px;" width="14" height="13" viewBox="0 0 14 13"><path d="M5.5 3 A2.6 2.6 0 0 1 8.1 5.6 C8.1 7 7 7.5 6.7 9 H4.3 C4 7.5 2.9 7 2.9 5.6 A2.6 2.6 0 0 1 5.5 3Z" fill="#d0d0d0"/><rect x="4.5" y="9.3" width="2" height="2.5" fill="#d0d0d0"/><path d="M5.5 0 V1.5 M1 2 L2 3 M10 2 L9 3 M0 6 H1.5 M9.5 6 H11" stroke="#c8c8c8" stroke-width="0.9"/></svg>
<svg class="a" style="left:550px;top:19px;" width="14" height="13" viewBox="0 0 14 13"><circle cx="7.5" cy="5.8" r="3.6" fill="#3cb8c8"/><path d="M1 9 L3 7.5 M2 10.5 L4 9 M3.5 8.5 L4.5 10" stroke="#c8c8c8" stroke-width="0.8"/></svg>
<svg class="a" style="left:565px;top:19.5px;" width="4" height="13" viewBox="0 0 4 13"><rect x="2" y="0" width="1" height="12" fill="#7c7c7c"/><rect x="1.5" y="3" width="2" height="6" rx="0.8" fill="#9a9a9a"/></svg>
<div class="a" style="left:571.8px;top:19px;width:13.6px;height:13.1px;background:#5285a6;"></div>
<svg class="a" style="left:571.8px;top:19px;" width="14" height="13" viewBox="0 0 14 13"><ellipse cx="7" cy="10" rx="5" ry="2" fill="none" stroke="#3cb8c8" stroke-width="1"/><circle cx="7" cy="5.8" r="4.2" fill="#dcdcdc"/><path d="M3.5 7.5 Q7 9.5 10.5 7.5" fill="#a8a8a8"/></svg>
<svg class="a" style="left:587px;top:19px;" width="14" height="13" viewBox="0 0 14 13"><circle cx="4.5" cy="8.5" r="3.5" fill="#5a5a5a"/><circle cx="6" cy="7" r="3.5" fill="#777"/><circle cx="7.8" cy="4.8" r="3.6" fill="#d8d8d8"/></svg>
<div class="a" style="left:600.5px;top:19px;width:13.5px;height:13.1px;background:#5285a6;"></div>
<svg class="a" style="left:600.5px;top:19px;" width="14" height="13" viewBox="0 0 14 13"><circle cx="6.8" cy="6.5" r="4.4" fill="none" stroke="#3cb8c8" stroke-width="1.6"/><path d="M7 2 A4.5 4.5 0 0 1 7 11" fill="none" stroke="#d8d8d8" stroke-width="1.8" stroke-dasharray="1.6 0.8"/></svg>
<div class="a" style="left:615px;top:19px;width:13.6px;height:13px;background:#3b3b3b;"></div>
<svg class="a" style="left:615px;top:19px;" width="14" height="13" viewBox="0 0 14 13"><rect x="2.5" y="2.5" width="6" height="6" fill="#3e4d50"/><rect x="5" y="5" width="6.5" height="6.5" fill="#44585c"/></svg>
<svg class="a" style="left:631px;top:19.5px;" width="4" height="13" viewBox="0 0 4 13"><rect x="2" y="0" width="1" height="12" fill="#7c7c7c"/><rect x="1.5" y="3" width="2" height="6" rx="0.8" fill="#9a9a9a"/></svg>
<svg class="a" style="left:639.6px;top:19px;" width="14" height="13" viewBox="0 0 14 13"><path d="M0.5 0.5 H7.5 V4 M0.5 0.5 V8 H4" fill="none" stroke="#3cb8c8" stroke-width="1" stroke-dasharray="1.3 1"/><path d="M5 4.5 L5 12.5 L7 10.5 L8.5 13 L9.5 12.5 L8.3 10 L10.5 10 Z" fill="#c8c8c8"/></svg>
<svg class="a" style="left:653px;top:19.5px;" width="4" height="13" viewBox="0 0 4 13"><rect x="2" y="0" width="1" height="12" fill="#7c7c7c"/><rect x="1.5" y="3" width="2" height="6" rx="0.8" fill="#9a9a9a"/></svg>
<svg class="a" style="left:661.5px;top:19px;" width="14" height="13" viewBox="0 0 14 13"><rect x="3.5" y="1.5" width="6.5" height="6.5" fill="#2b2b2b" stroke="#d0d0d0" stroke-width="1.2"/><rect x="0.8" y="4.5" width="6" height="6" fill="#d0d0d0" stroke="#2b2b2b" stroke-width="0.6"/><rect x="3" y="6.5" width="2" height="2" fill="#888"/></svg>
<svg class="a" style="left:676.5px;top:19px;" width="14" height="13" viewBox="0 0 14 13"><rect x="3.5" y="1.5" width="6.5" height="6.5" fill="none" stroke="#d0d0d0" stroke-width="1.2"/><rect x="0.5" y="4.5" width="6.5" height="6.5" fill="#d0d0d0"/></svg>
<svg class="a" style="left:691px;top:19px;" width="14" height="13" viewBox="0 0 14 13"><rect x="0.8" y="1.8" width="8.8" height="9" fill="#2b2b2b" stroke="#d0d0d0" stroke-width="1.1"/><path d="M3 4 L7.5 8.5" stroke="#d0d0d0" stroke-width="1"/><path d="M2.5 3.5 H5 L2.5 6Z" fill="#d0d0d0"/></svg>
<svg class="a" style="left:704px;top:19.5px;" width="4" height="13" viewBox="0 0 4 13"><rect x="2" y="0" width="1" height="12" fill="#7c7c7c"/><rect x="1.5" y="3" width="2" height="6" rx="0.8" fill="#9a9a9a"/></svg>
<svg class="a" style="left:714.5px;top:19px;" width="14" height="13" viewBox="0 0 14 13"><circle cx="5" cy="6.5" r="4.5" fill="#d0d0d0"/><path d="M5 2 L6.5 5 M9.5 6.5 L6 7 M5 11 L3.8 8 M0.5 6.5 L4 6" stroke="#444" stroke-width="1.1"/><circle cx="5" cy="6.5" r="1.5" fill="#444"/></svg>
<div class="a" style="left:727.7px;top:20px;width:28px;height:9.7px;background:#2b2b2b;border-radius:2px"></div>
<div class="t" style="left:731px;top:21.92px;font-size:8.6px;color:#d0d0d0;font-weight:normal;">0.00</div>
<svg class="a" style="left:761px;top:19px;" width="14" height="13" viewBox="0 0 14 13"><path d="M4 2 A4.5 4.5 0 0 0 4 11Z" fill="#d0d0d0"/><rect x="4.5" y="2" width="3.8" height="9" fill="#d0d0d0"/><path d="M4.5 3 A3.5 3.5 0 0 1 4.5 10Z" fill="#444"/></svg>
<div class="a" style="left:773.9px;top:20px;width:28px;height:9.7px;background:#2b2b2b;border-radius:2px"></div>
<div class="t" style="left:777px;top:21.92px;font-size:8.6px;color:#d0d0d0;font-weight:normal;">1.00</div>
<div class="a" style="left:804.4px;top:18.7px;width:13.6px;height:13.7px;background:#5285a6;"></div>
<svg class="a" style="left:804.4px;top:19px;" width="14" height="13" viewBox="0 0 14 13"><circle cx="6.8" cy="6.8" r="4.3" fill="#2fb0bf" stroke="#1e6f7a" stroke-width="0.8"/><text x="6.8" y="8.2" font-size="3.5" text-anchor="middle" fill="#15555e" font-family="Liberation Sans">O/V</text></svg>
<div class="a" style="left:820.5px;top:19px;width:149.5px;height:12.4px;background:#585858;border-radius:2px"></div>
<div class="a" style="left:954.4px;top:19px;width:15.6px;height:12.4px;background:#5c5c5c;border-radius:0 2px 2px 0"></div>
<div class="a" style="left:954px;top:19px;width:1px;height:12.4px;background:#505050;"></div>
<div class="t" style="left:822.4px;top:22.83px;font-size:8.0px;color:#d4d4d4;font-weight:normal;">Log (sRGB)</div>
<svg class="a" style="left:958px;top:22px;" width="9" height="6" viewBox="0 0 9 6"><path d="M0.5 0.5 L8.5 0.5 L4.5 5Z" fill="#d8d8d8"/></svg>
<div class="t" style="left:248.4px;top:35.60px;font-size:7.8px;color:#f2f4f6;font-weight:bold;">Verts:</div>
<div class="t" style="left:312.9px;top:35.60px;font-size:7.8px;color:#f2f4f6;font-weight:bold;">14354</div>
<div class="t" style="left:379.6px;top:35.60px;font-size:7.8px;color:#f2f4f6;font-weight:bold;">0</div>
<div class="t" style="left:428.8px;top:35.60px;font-size:7.8px;color:#f2f4f6;font-weight:bold;">0</div>
<div class="t" style="left:248.4px;top:50.57px;font-size:7.8px;color:#f2f4f6;font-weight:bold;">Edges:</div>
<div class="t" style="left:312.9px;top:50.57px;font-size:7.8px;color:#f2f4f6;font-weight:bold;">28328</div>
<div class="t" style="left:379.6px;top:50.57px;font-size:7.8px;color:#f2f4f6;font-weight:bold;">0</div>
<div class="t" style="left:428.8px;top:50.57px;font-size:7.8px;color:#f2f4f6;font-weight:bold;">0</div>
<div class="t" style="left:248.4px;top:65.54px;font-size:7.8px;color:#f2f4f6;font-weight:bold;">Faces:</div>
<div class="t" style="left:312.9px;top:65.54px;font-size:7.8px;color:#f2f4f6;font-weight:bold;">14016</div>
<div class="t" style="left:379.6px;top:65.54px;font-size:7.8px;color:#f2f4f6;font-weight:bold;">0</div>
<div class="t" style="left:428.8px;top:65.54px;font-size:7.8px;color:#f2f4f6;font-weight:bold;">0</div>
<div class="t" style="left:248.4px;top:80.51px;font-size:7.8px;color:#f2f4f6;font-weight:bold;">Tris:</div>
<div class="t" style="left:312.9px;top:80.51px;font-size:7.8px;color:#f2f4f6;font-weight:bold;">27808</div>
<div class="t" style="left:379.6px;top:80.51px;font-size:7.8px;color:#f2f4f6;font-weight:bold;">0</div>
<div class="t" style="left:428.8px;top:80.51px;font-size:7.8px;color:#f2f4f6;font-weight:bold;">0</div>
<div class="t" style="left:248.4px;top:95.48px;font-size:7.8px;color:#f2f4f6;font-weight:bold;">UVs:</div>
<div class="t" style="left:312.9px;top:95.48px;font-size:7.8px;color:#f2f4f6;font-weight:bold;">17119</div>
<div class="t" style="left:379.6px;top:95.48px;font-size:7.8px;color:#f2f4f6;font-weight:bold;">0</div>
<div class="t" style="left:428.8px;top:95.48px;font-size:7.8px;color:#f2f4f6;font-weight:bold;">0</div>
<svg class="a" style="left:248px;top:528px;" width="30" height="28" viewBox="0 0 30 28"><path d="M8.5 8 V23.5" stroke="#20d020" stroke-width="1.2"/><text x="5" y="7.5" font-size="6.5" fill="#20d020" font-family="Liberation Sans" font-weight="bold">y</text><path d="M8.5 23.5 H16" stroke="#d02020" stroke-width="1.2"/><text x="15.5" y="20.5" font-size="6.5" fill="#e02020" font-family="Liberation Sans" font-weight="bold">x</text><path d="M6 24 L11 24 L9 25.5Z" fill="#2a40e0"/></svg>
<div class="t" style="left:719px;top:555.56px;font-size:8.2px;color:#f0f0f0;font-weight:bold;">persp</div>
<div class="a" style="left:1235px;top:0px;width:3px;height:574px;background:#383838;"></div>
<div class="a" style="left:1238px;top:0px;width:207px;height:2px;background:#383838;"></div>
<div class="a" style="left:1238px;top:2px;width:198px;height:569px;background:#444;"></div>
<svg class="a" style="left:1389px;top:4px;" width="12" height="12" viewBox="0 0 12 12"><path d="M6 0.5 L8.5 4 L3.5 4Z" fill="#6cc23a"/><path d="M0.5 10.5 L3 6.5 L5 10.5Z" fill="#3a7ef0"/><path d="M11.5 10.5 L9 6.5 L7 10.5Z" fill="#e84848"/><circle cx="6" cy="6.8" r="1.8" fill="#d8d8d8"/><path d="M6 4.5 V6.8 L3.5 9 M6 6.8 L8.5 9" stroke="#d8d8d8" stroke-width="0.9"/></svg>
<svg class="a" style="left:1405px;top:4px;" width="12" height="12" viewBox="0 0 12 12"><path d="M1.5 10 A5 5 0 1 1 11 7" fill="none" stroke="#3cb8c8" stroke-width="2.6"/><path d="M4.5 6.5 A1.5 1.5 0 0 1 7.5 6.5 M5.8 7.2 H9" stroke="#3cb8c8" stroke-width="1"/><path d="M8.5 7 L11.5 7 L10 9.5Z" fill="#888"/></svg>
<svg class="a" style="left:1421.5px;top:4px;" width="12" height="12" viewBox="0 0 12 12"><path d="M1 0.5 V10.5 H10" fill="none" stroke="#9a9a9a" stroke-width="1"/><path d="M2.5 9 L9.5 2" stroke="#3cb8c8" stroke-width="1.4"/><path d="M6.5 1.2 L10.5 1 L10.3 5Z" fill="#3cb8c8"/></svg>
<div class="t" style="left:1247.4px;top:22.40px;font-size:8.5px;color:#c8c8c8;font-weight:normal;">Channels</div>
<div class="t" style="left:1295.3px;top:22.40px;font-size:8.5px;color:#c8c8c8;font-weight:normal;">Edit</div>
<div class="t" style="left:1322px;top:22.40px;font-size:8.5px;color:#c8c8c8;font-weight:normal;">Object</div>
<div class="t" style="left:1358.3px;top:22.40px;font-size:8.5px;color:#c8c8c8;font-weight:normal;">Show</div>
<div class="a" style="left:1242px;top:35px;width:191.3px;height:277.3px;background:#2b2b2b;"></div>
<svg class="a" style="left:1305px;top:315px;" width="60" height="2" viewBox="0 0 60 2"><rect x="0" y="0" width="1" height="1" fill="#6a6a6a"/><rect x="2" y="0" width="1" height="1" fill="#6a6a6a"/><rect x="4" y="0" width="1" height="1" fill="#6a6a6a"/><rect x="6" y="0" width="1" height="1" fill="#6a6a6a"/><rect x="8" y="0" width="1" height="1" fill="#6a6a6a"/><rect x="10" y="0" width="1" height="1" fill="#6a6a6a"/><rect x="12" y="0" width="1" height="1" fill="#6a6a6a"/><rect x="14" y="0" width="1" height="1" fill="#6a6a6a"/><rect x="16" y="0" width="1" height="1" fill="#6a6a6a"/><rect x="18" y="0" width="1" height="1" fill="#6a6a6a"/><rect x="20" y="0" width="1" height="1" fill="#6a6a6a"/><rect x="22" y="0" width="1" height="1" fill="#6a6a6a"/><rect x="24" y="0" width="1" height="1" fill="#6a6a6a"/><rect x="26" y="0" width="1" height="1" fill="#6a6a6a"/><rect x="28" y="0" width="1" height="1" fill="#6a6a6a"/><rect x="30" y="0" width="1" height="1" fill="#6a6a6a"/><rect x="32" y="0" width="1" height="1" fill="#6a6a6a"/><rect x="34" y="0" width="1" height="1" fill="#6a6a6a"/><rect x="36" y="0" width="1" height="1" fill="#6a6a6a"/><rect x="38" y="0" width="1" height="1" fill="#6a6a6a"/><rect x="40" y="0" width="1" height="1" fill="#6a6a6a"/><rect x="42" y="0" width="1" height="1" fill="#6a6a6a"/><rect x="44" y="0" width="1" height="1" fill="#6a6a6a"/><rect x="46" y="0" width="1" height="1" fill="#6a6a6a"/><rect x="48" y="0" width="1" height="1" fill="#6a6a6a"/><rect x="50" y="0" width="1" height="1" fill="#6a6a6a"/><rect x="52" y="0" width="1" height="1" fill="#6a6a6a"/><rect x="54" y="0" width="1" height="1" fill="#6a6a6a"/><rect x="56" y="0" width="1" height="1" fill="#6a6a6a"/><rect x="58" y="0" width="1" height="1" fill="#6a6a6a"/></svg>
<div class="a" style="left:1241.5px;top:322.5px;width:191.8px;height:244px;background:#3e3e3e;border-radius:2px"></div>
<div class="a" style="left:1242px;top:322.5px;width:44.3px;height:13px;background:#4a4a4a;border-radius:2px 2px 0 0"></div>
<div class="a" style="left:1288.5px;top:323.5px;width:34.5px;height:12px;background:#3a3a3a;border-radius:2px 2px 0 0;border:1px solid #474747;border-bottom:none"></div>
<div class="t" style="left:1250.3px;top:326.22px;font-size:8.6px;color:#dcdcdc;font-weight:normal;">Display</div>
<div class="t" style="left:1296px;top:326.22px;font-size:8.6px;color:#8c8c8c;font-weight:normal;">Anim</div>
<div class="a" style="left:1243px;top:335.3px;width:189px;height:35.3px;background:#484848;"></div>
<div class="t" style="left:1249.6px;top:340.12px;font-size:8.6px;color:#c8c8c8;font-weight:normal;">Layers</div>
<div class="t" style="left:1284.5px;top:340.12px;font-size:8.6px;color:#c8c8c8;font-weight:normal;">Options</div>
<div class="t" style="left:1327.5px;top:340.12px;font-size:8.6px;color:#c8c8c8;font-weight:normal;">Help</div>
<svg class="a" style="left:1360px;top:354.5px;" width="13" height="11" viewBox="0 0 13 11"><path d="M0.5 5.5 L6 2 L9.5 4 L4 7.5Z" fill="#d4d4d4"/><path d="M0.5 5.5 L4 7.5 L4 9 L0.5 7Z" fill="#a0a0a0"/><path d="M4 7.5 L9.5 4 L9.5 5.5 L4 9Z" fill="#b8b8b8"/><path d="M10 9.5 V3.5" stroke="#3cb8c8" stroke-width="1.5"/><path d="M7.8 5.2 L10 2.5 L12.2 5.2Z" fill="#3cb8c8"/></svg>
<svg class="a" style="left:1377.5px;top:354.5px;" width="13" height="11" viewBox="0 0 13 11"><path d="M0.5 5.5 L6 2 L9.5 4 L4 7.5Z" fill="#d4d4d4"/><path d="M0.5 5.5 L4 7.5 L4 9 L0.5 7Z" fill="#a0a0a0"/><path d="M4 7.5 L9.5 4 L9.5 5.5 L4 9Z" fill="#b8b8b8"/><path d="M10 2.5 V8" stroke="#3cb8c8" stroke-width="1.5"/><path d="M7.8 6.8 L10 9.5 L12.2 6.8Z" fill="#3cb8c8"/></svg>
<svg class="a" style="left:1398px;top:354.5px;" width="13" height="11" viewBox="0 0 13 11"><path d="M0.5 5.5 L6 2 L9.5 4 L4 7.5Z" fill="#d4d4d4"/><path d="M0.5 5.5 L4 7.5 L4 9 L0.5 7Z" fill="#a0a0a0"/><path d="M4 7.5 L9.5 4 L9.5 5.5 L4 9Z" fill="#b8b8b8"/><path d="M10 0.5 V5.5 M7.5 3 H12.5" stroke="#3cb8c8" stroke-width="1.3"/></svg>
<svg class="a" style="left:1416.5px;top:354.5px;" width="13" height="11" viewBox="0 0 13 11"><path d="M0.5 5.5 L6 2 L9.5 4 L4 7.5Z" fill="#d4d4d4"/><path d="M0.5 5.5 L4 7.5 L4 9 L0.5 7Z" fill="#a0a0a0"/><path d="M4 7.5 L9.5 4 L9.5 5.5 L4 9Z" fill="#b8b8b8"/><circle cx="10" cy="3.3" r="2.5" fill="#3cb8c8"/></svg>
<div class="a" style="left:1244px;top:370.6px;width:187px;height:185px;background:#2b2b2b;"></div>
<div class="a" style="left:1244px;top:555.6px;width:187px;height:11px;background:#373737;"></div>
<svg class="a" style="left:1246px;top:557px;" width="7" height="8" viewBox="0 0 7 8"><path d="M5 0.5 L5 7.5 L1 4Z" fill="#c0c0c0"/></svg>
<div class="a" style="left:1254px;top:557px;width:116.5px;height:7px;background:#5a5a5a;border-radius:4px"></div>
<svg class="a" style="left:1422px;top:557px;" width="7" height="8" viewBox="0 0 7 8"><path d="M1.5 0.5 L1.5 7.5 L5.5 4Z" fill="#c0c0c0"/></svg>
<div class="a" style="left:1433.3px;top:2px;width:2.7px;height:570px;background:#383838;"></div>
<div class="a" style="left:1436px;top:0px;width:9px;height:574px;background:#3a3a3a;"></div>
<div class="a" style="left:1436px;top:2px;width:9px;height:120px;background:#444;"></div>
<div class="t" style="left:1436.3px;top:12.00px;font-size:8.4px;color:#d4d4d4;font-weight:normal;transform-origin:0 0;transform:translate(8.7px,0) rotate(90deg);">Channel Box / Layer Editor</div>
<div class="t" style="left:1436.3px;top:131.00px;font-size:9.2px;color:#8a8a8a;font-weight:normal;transform-origin:0 0;transform:translate(8.7px,0) rotate(90deg);">Modeling Toolkit</div>
<div class="t" style="left:1436.3px;top:215.60px;font-size:9.2px;color:#8a8a8a;font-weight:normal;transform-origin:0 0;transform:translate(8.7px,0) rotate(90deg);">Attribute Editor</div>
<div class="a" style="left:1436px;top:202.5px;width:9px;height:1px;background:#4a4a4a;"></div>
<div class="a" style="left:1436px;top:283px;width:9px;height:1px;background:#4a4a4a;"></div>
<div class="a" style="left:0px;top:571px;width:1445px;height:3px;background:#383838;"></div>
<svg class="a" style="left:1px;top:576px;" width="4" height="22" viewBox="0 0 4 22"><rect x="0" y="0" width="1" height="1" fill="#6a6a6a"/><rect x="3" y="0" width="1" height="1" fill="#6a6a6a"/><rect x="0" y="2" width="1" height="1" fill="#6a6a6a"/><rect x="3" y="2" width="1" height="1" fill="#6a6a6a"/><rect x="0" y="4" width="1" height="1" fill="#6a6a6a"/><rect x="3" y="4" width="1" height="1" fill="#6a6a6a"/><rect x="0" y="6" width="1" height="1" fill="#6a6a6a"/><rect x="3" y="6" width="1" height="1" fill="#6a6a6a"/><rect x="0" y="8" width="1" height="1" fill="#6a6a6a"/><rect x="3" y="8" width="1" height="1" fill="#6a6a6a"/><rect x="0" y="10" width="1" height="1" fill="#6a6a6a"/><rect x="3" y="10" width="1" height="1" fill="#6a6a6a"/><rect x="0" y="12" width="1" height="1" fill="#6a6a6a"/><rect x="3" y="12" width="1" height="1" fill="#6a6a6a"/><rect x="0" y="14" width="1" height="1" fill="#6a6a6a"/><rect x="3" y="14" width="1" height="1" fill="#6a6a6a"/><rect x="0" y="16" width="1" height="1" fill="#6a6a6a"/><rect x="3" y="16" width="1" height="1" fill="#6a6a6a"/><rect x="0" y="18" width="1" height="1" fill="#6a6a6a"/><rect x="3" y="18" width="1" height="1" fill="#6a6a6a"/><rect x="0" y="20" width="1" height="1" fill="#6a6a6a"/><rect x="3" y="20" width="1" height="1" fill="#6a6a6a"/></svg>
<div class="a" style="left:8.3px;top:575.8px;width:1217.5px;height:22px;background:#2b2b2b;"></div>
<div class="a" style="left:14.7px;top:575.8px;width:8.7px;height:22px;background:#555;"></div>
<div class="t" style="left:16.3px;top:585.72px;font-size:8.6px;color:#e0e0e0;font-weight:normal;">1</div>
<svg class="a" style="left:14px;top:585.8px;" width="1215" height="10" viewBox="0 0 1215 10"><rect x="40.2" y="0" width="1.2" height="9.5" fill="#a8a8a8"/><rect x="90.5" y="0" width="1.2" height="9.5" fill="#a8a8a8"/><rect x="140.7" y="0" width="1.2" height="9.5" fill="#a8a8a8"/><rect x="191.0" y="0" width="1.2" height="9.5" fill="#a8a8a8"/><rect x="241.2" y="0" width="1.2" height="9.5" fill="#a8a8a8"/><rect x="291.5" y="0" width="1.2" height="9.5" fill="#a8a8a8"/><rect x="341.8" y="0" width="1.2" height="9.5" fill="#a8a8a8"/><rect x="392.0" y="0" width="1.2" height="9.5" fill="#a8a8a8"/><rect x="442.3" y="0" width="1.2" height="9.5" fill="#a8a8a8"/><rect x="492.5" y="0" width="1.2" height="9.5" fill="#a8a8a8"/><rect x="542.8" y="0" width="1.2" height="9.5" fill="#a8a8a8"/><rect x="593.1" y="0" width="1.2" height="9.5" fill="#a8a8a8"/><rect x="643.3" y="0" width="1.2" height="9.5" fill="#a8a8a8"/><rect x="693.6" y="0" width="1.2" height="9.5" fill="#a8a8a8"/><rect x="743.8" y="0" width="1.2" height="9.5" fill="#a8a8a8"/><rect x="794.1" y="0" width="1.2" height="9.5" fill="#a8a8a8"/><rect x="844.4" y="0" width="1.2" height="9.5" fill="#a8a8a8"/><rect x="894.6" y="0" width="1.2" height="9.5" fill="#a8a8a8"/><rect x="944.9" y="0" width="1.2" height="9.5" fill="#a8a8a8"/><rect x="995.1" y="0" width="1.2" height="9.5" fill="#a8a8a8"/><rect x="1045.4" y="0" width="1.2" height="9.5" fill="#a8a8a8"/><rect x="1095.7" y="0" width="1.2" height="9.5" fill="#a8a8a8"/><rect x="1145.9" y="0" width="1.2" height="9.5" fill="#a8a8a8"/><rect x="1196.2" y="0" width="1.2" height="9.5" fill="#a8a8a8"/></svg>
<div class="t" style="left:55.5px;top:575.19px;font-size:8.4px;color:#8e8e8e;font-weight:normal;">5</div>
<div class="t" style="left:105.8px;top:575.19px;font-size:8.4px;color:#8e8e8e;font-weight:normal;">10</div>
<div class="t" style="left:156.0px;top:575.19px;font-size:8.4px;color:#8e8e8e;font-weight:normal;">15</div>
<div class="t" style="left:206.3px;top:575.19px;font-size:8.4px;color:#8e8e8e;font-weight:normal;">20</div>
<div class="t" style="left:256.5px;top:575.19px;font-size:8.4px;color:#8e8e8e;font-weight:normal;">25</div>
<div class="t" style="left:306.8px;top:575.19px;font-size:8.4px;color:#8e8e8e;font-weight:normal;">30</div>
<div class="t" style="left:357.1px;top:575.19px;font-size:8.4px;color:#8e8e8e;font-weight:normal;">35</div>
<div class="t" style="left:407.3px;top:575.19px;font-size:8.4px;color:#8e8e8e;font-weight:normal;">40</div>
<div class="t" style="left:457.6px;top:575.19px;font-size:8.4px;color:#8e8e8e;font-weight:normal;">45</div>
<div class="t" style="left:507.8px;top:575.19px;font-size:8.4px;color:#8e8e8e;font-weight:normal;">50</div>
<div class="t" style="left:558.1px;top:575.19px;font-size:8.4px;color:#8e8e8e;font-weight:normal;">55</div>
<div class="t" style="left:608.4px;top:575.19px;font-size:8.4px;color:#8e8e8e;font-weight:normal;">60</div>
<div class="t" style="left:658.6px;top:575.19px;font-size:8.4px;color:#8e8e8e;font-weight:normal;">65</div>
<div class="t" style="left:708.9px;top:575.19px;font-size:8.4px;color:#8e8e8e;font-weight:normal;">70</div>
<div class="t" style="left:759.1px;top:575.19px;font-size:8.4px;color:#8e8e8e;font-weight:normal;">75</div>
<div class="t" style="left:809.4px;top:575.19px;font-size:8.4px;color:#8e8e8e;font-weight:normal;">80</div>
<div class="t" style="left:859.7px;top:575.19px;font-size:8.4px;color:#8e8e8e;font-weight:normal;">85</div>
<div class="t" style="left:909.9px;top:575.19px;font-size:8.4px;color:#8e8e8e;font-weight:normal;">90</div>
<div class="t" style="left:960.2px;top:575.19px;font-size:8.4px;color:#8e8e8e;font-weight:normal;">95</div>
<div class="t" style="left:1010.4px;top:575.19px;font-size:8.4px;color:#8e8e8e;font-weight:normal;">100</div>
<div class="t" style="left:1060.7px;top:575.19px;font-size:8.4px;color:#8e8e8e;font-weight:normal;">105</div>
<div class="t" style="left:1111.0px;top:575.19px;font-size:8.4px;color:#8e8e8e;font-weight:normal;">110</div>
<div class="t" style="left:1161.2px;top:575.19px;font-size:8.4px;color:#8e8e8e;font-weight:normal;">115</div>
<div class="t" style="left:1211.5px;top:575.19px;font-size:8.4px;color:#8e8e8e;font-weight:normal;">120</div>
<div class="a" style="left:1231.3px;top:580px;width:66px;height:13.6px;background:#2b2b2b;border-radius:2px"></div>
<div class="t" style="left:1236px;top:583.52px;font-size:8.6px;color:#d0d0d0;font-weight:normal;">1</div>
<svg class="a" style="left:1304.9px;top:582.2px;overflow:visible" width="13" height="10" viewBox="0 0 13 10"><rect x="0" y="0" width="1.5" height="9.2" fill="#c8c8c8"/><path d="M1.5 4.6 L6.5 0.5 V8.7Z M7 4.6 L12 0.5 V8.7Z" fill="#c8c8c8"/></svg>
<svg class="a" style="left:1323.4px;top:582.2px;overflow:visible" width="10" height="10" viewBox="0 0 10 10"><rect x="0" y="0" width="1.5" height="9.2" fill="#c8c8c8"/><path d="M2 4.6 L9.5 0.5 V8.7Z" fill="#c8c8c8"/></svg>
<svg class="a" style="left:1341px;top:582.2px;overflow:visible" width="11" height="10" viewBox="0 0 11 10"><rect x="0" y="-1" width="1.8" height="11.2" fill="#f08a3a"/><path d="M2.5 4.6 L10 0.5 V8.7Z" fill="#c8c8c8"/></svg>
<svg class="a" style="left:1358px;top:582.2px;overflow:visible" width="11" height="10" viewBox="0 0 11 10"><path d="M0 4.6 L10 -0.5 V9.7Z" fill="#c8c8c8"/></svg>
<svg class="a" style="left:1375.6px;top:582.2px;overflow:visible" width="11" height="10" viewBox="0 0 11 10"><path d="M10.5 4.6 L0.5 -0.5 V9.7Z" fill="#c8c8c8"/></svg>
<svg class="a" style="left:1393px;top:582.2px;overflow:visible" width="11" height="10" viewBox="0 0 11 10"><path d="M8 4.6 L0.5 0.5 V8.7Z" fill="#c8c8c8"/><rect x="8.6" y="-1" width="1.8" height="11.2" fill="#f08a3a"/></svg>
<svg class="a" style="left:1410px;top:582.2px;overflow:visible" width="11" height="10" viewBox="0 0 11 10"><path d="M8 4.6 L0.5 0.5 V8.7Z" fill="#c8c8c8"/><rect x="8.6" y="0" width="1.5" height="9.2" fill="#c8c8c8"/></svg>
<svg class="a" style="left:1427px;top:582.2px;overflow:visible" width="13" height="10" viewBox="0 0 13 10"><path d="M5 4.6 L0 0.5 V8.7Z M10.5 4.6 L5.5 0.5 V8.7Z" fill="#c8c8c8"/><rect x="10.5" y="0" width="1.5" height="9.2" fill="#c8c8c8"/></svg>
<div class="a" style="left:0px;top:599px;width:1445px;height:4.5px;background:#383838;"></div>
<svg class="a" style="left:1px;top:605px;" width="4" height="22" viewBox="0 0 4 22"><rect x="0" y="0" width="1" height="1" fill="#6a6a6a"/><rect x="3" y="0" width="1" height="1" fill="#6a6a6a"/><rect x="0" y="2" width="1" height="1" fill="#6a6a6a"/><rect x="3" y="2" width="1" height="1" fill="#6a6a6a"/><rect x="0" y="4" width="1" height="1" fill="#6a6a6a"/><rect x="3" y="4" width="1" height="1" fill="#6a6a6a"/><rect x="0" y="6" width="1" height="1" fill="#6a6a6a"/><rect x="3" y="6" width="1" height="1" fill="#6a6a6a"/><rect x="0" y="8" width="1" height="1" fill="#6a6a6a"/><rect x="3" y="8" width="1" height="1" fill="#6a6a6a"/><rect x="0" y="10" width="1" height="1" fill="#6a6a6a"/><rect x="3" y="10" width="1" height="1" fill="#6a6a6a"/><rect x="0" y="12" width="1" height="1" fill="#6a6a6a"/><rect x="3" y="12" width="1" height="1" fill="#6a6a6a"/><rect x="0" y="14" width="1" height="1" fill="#6a6a6a"/><rect x="3" y="14" width="1" height="1" fill="#6a6a6a"/><rect x="0" y="16" width="1" height="1" fill="#6a6a6a"/><rect x="3" y="16" width="1" height="1" fill="#6a6a6a"/><rect x="0" y="18" width="1" height="1" fill="#6a6a6a"/><rect x="3" y="18" width="1" height="1" fill="#6a6a6a"/><rect x="0" y="20" width="1" height="1" fill="#6a6a6a"/><rect x="3" y="20" width="1" height="1" fill="#6a6a6a"/></svg>
<div class="a" style="left:9px;top:607px;width:66.3px;height:18px;background:#2b2b2b;border-radius:2px"></div>
<div class="t" style="left:13.8px;top:612.82px;font-size:8.6px;color:#d0d0d0;font-weight:normal;">1</div>
<div class="a" style="left:81.7px;top:607px;width:66.3px;height:18px;background:#2b2b2b;border-radius:2px"></div>
<div class="t" style="left:86.5px;top:612.82px;font-size:8.6px;color:#d0d0d0;font-weight:normal;">1</div>
<div class="a" style="left:151.2px;top:605.5px;width:692.8px;height:20px;background:#3c3c3c;"></div>
<div class="a" style="left:156.8px;top:607.8px;width:421.1px;height:15.6px;background:#5e5e5e;border-radius:3px"></div>
<div class="a" style="left:160px;top:611px;width:11.5px;height:9.5px;background:#9a9a9a;border-radius:2px"></div>
<div class="t" style="left:174px;top:612.69px;font-size:8.4px;color:#d8d8d8;font-weight:normal;">1</div>
<div class="t" style="left:546.8px;top:612.69px;font-size:8.4px;color:#d8d8d8;font-weight:normal;">120</div>
<div class="a" style="left:563.3px;top:611px;width:11.7px;height:9.5px;background:#9a9a9a;border-radius:2px"></div>
<div class="a" style="left:853.8px;top:607px;width:66.5px;height:18.5px;background:#2b2b2b;border-radius:2px"></div>
<div class="t" style="left:857.8px;top:612.60px;font-size:8.5px;color:#d0d0d0;font-weight:normal;">120</div>
<div class="a" style="left:925.8px;top:607px;width:66.5px;height:18.5px;background:#2b2b2b;border-radius:2px"></div>
<div class="t" style="left:929.6px;top:612.60px;font-size:8.5px;color:#d0d0d0;font-weight:normal;">200</div>
<svg class="a" style="left:995px;top:608px;" width="4" height="17" viewBox="0 0 4 17"><rect x="2" y="0" width="1" height="17" fill="#7c7c7c"/><rect x="1.5" y="4.5" width="2" height="8" rx="0.8" fill="#9a9a9a"/></svg>
<svg class="a" style="left:1009px;top:608px;" width="14" height="14" viewBox="0 0 14 14"><path d="M0.5 2 H6.5 V12.5 L3.5 9.8 L0.5 12.5Z" fill="#f08a3a"/><path d="M8.5 0 V6 M5.5 3 H11.5" stroke="#e8e8e8" stroke-width="1.4"/></svg>
<svg class="a" style="left:1028px;top:608px;" width="4" height="17" viewBox="0 0 4 17"><rect x="2" y="0" width="1" height="17" fill="#7c7c7c"/><rect x="1.5" y="4.5" width="2" height="8" rx="0.8" fill="#9a9a9a"/></svg>
<svg class="a" style="left:1042px;top:612px;" width="6" height="5" viewBox="0 0 6 5"><path d="M0.5 0.5 H5.5 L3 4Z" fill="none" stroke="#999" stroke-width="0.8"/></svg>
<div class="a" style="left:1054.5px;top:607px;width:76.2px;height:18.5px;background:#434343;border:1px solid #3a3a3a;border-radius:2px"></div>
<div class="t" style="left:1058.6px;top:612.69px;font-size:8.4px;color:#c8c8c8;font-weight:normal;">No Character Set</div>
<svg class="a" style="left:1139px;top:612px;" width="7" height="5" viewBox="0 0 7 5"><path d="M0.5 0.5 H6.5 L3.5 4Z" fill="none" stroke="#999" stroke-width="0.8"/></svg>
<div class="a" style="left:1151.4px;top:607px;width:76.1px;height:18.5px;background:#434343;border:1px solid #3a3a3a;border-radius:2px"></div>
<div class="t" style="left:1155.8px;top:612.69px;font-size:8.4px;color:#c8c8c8;font-weight:normal;">No Anim Layer</div>
<svg class="a" style="left:1234px;top:608px;" width="4" height="17" viewBox="0 0 4 17"><rect x="2" y="0" width="1" height="17" fill="#7c7c7c"/><rect x="1.5" y="4.5" width="2" height="8" rx="0.8" fill="#9a9a9a"/></svg>
<div class="a" style="left:1246.6px;top:608px;width:71.2px;height:14.5px;background:#555;border-radius:2px"></div>
<div class="a" style="left:1304px;top:608px;width:13.8px;height:14.5px;background:#5a5a5a;border-radius:0 2px 2px 0"></div>
<div class="a" style="left:1304px;top:608px;width:1px;height:14.5px;background:#4d4d4d;"></div>
<div class="t" style="left:1248.8px;top:612.60px;font-size:8.5px;color:#d0d0d0;font-weight:normal;">24 fps</div>
<svg class="a" style="left:1307px;top:613px;" width="8" height="5" viewBox="0 0 8 5"><path d="M0.5 0.5 H7.5 L4 4.5Z" fill="#d8d8d8"/></svg>
<svg class="a" style="left:1328.5px;top:611px;" width="13" height="10" viewBox="0 0 13 10"><path d="M2 5 V3.5 A1.5 1.5 0 0 1 3.5 2 H9.5 M11 5 V6.5 A1.5 1.5 0 0 1 9.5 8 H3.5" fill="none" stroke="#c8c8c8" stroke-width="1.3"/><path d="M8.5 0 L11 2 L8.5 4Z M4.5 6 L2 8 L4.5 10Z" fill="#c8c8c8"/></svg>
<div class="a" style="left:1348px;top:607px;width:18px;height:17.7px;background:#5285a6;"></div>
<svg class="a" style="left:1348px;top:607px;" width="18" height="18" viewBox="0 0 18 18"><rect x="2.5" y="6" width="11" height="7.5" fill="none" stroke="#f08a3a" stroke-width="1.3"/><rect x="4.5" y="8" width="2" height="3.5" fill="#f08a3a"/><rect x="8.5" y="8" width="2" height="3.5" fill="#f08a3a"/><path d="M10.5 2.5 L16 5.5 L10.5 8.5Z" fill="#e8e8e8"/></svg>
<svg class="a" style="left:1372px;top:608px;" width="4" height="17" viewBox="0 0 4 17"><rect x="2" y="0" width="1" height="17" fill="#7c7c7c"/><rect x="1.5" y="4.5" width="2" height="8" rx="0.8" fill="#9a9a9a"/></svg>
<svg class="a" style="left:1383.5px;top:610px;" width="14" height="12" viewBox="0 0 14 12"><path d="M0.5 4 H3 L6.5 1 V11 L3 8 H0.5Z" fill="#c8c8c8"/><path d="M8 4 A2.5 2.5 0 0 1 8 8 M10 2.5 A4.5 4.5 0 0 1 10 9.5" fill="none" stroke="#c8c8c8" stroke-width="1"/></svg>
<div class="a" style="left:1403.4px;top:607.5px;width:16.8px;height:16.5px;background:#d42d35;"></div>
<svg class="a" style="left:1403.4px;top:607.5px;" width="17" height="17" viewBox="0 0 17 17"><circle cx="8.4" cy="8.2" r="5.2" fill="none" stroke="#e8e8e8" stroke-width="1.2" stroke-dasharray="7 2"/><path d="M8.4 5 V10" stroke="#e8e8e8" stroke-width="1.3"/><rect x="7.6" y="11.2" width="1.6" height="1.4" fill="#e8e8e8"/></svg>
<svg class="a" style="left:1426px;top:608px;" width="15" height="16" viewBox="0 0 15 16"><circle cx="3.5" cy="3.5" r="2.2" fill="none" stroke="#c8c8c8" stroke-width="1.2" stroke-dasharray="1 0.8"/><circle cx="10.5" cy="4.5" r="1.6" fill="#f08a3a"/><path d="M9.5 6.5 L7.5 10 L10 11.5 L8.5 15 M8 10 L5 10.5 M10 8 L13 9.5 M9 11 L12 13" fill="none" stroke="#f08a3a" stroke-width="1.5"/></svg>
<div class="a" style="left:0px;top:626.8px;width:1445px;height:4.2px;background:#383838;"></div>
<svg class="a" style="left:1px;top:633px;" width="4" height="20" viewBox="0 0 4 20"><rect x="0" y="0" width="1" height="1" fill="#6a6a6a"/><rect x="3" y="0" width="1" height="1" fill="#6a6a6a"/><rect x="0" y="2" width="1" height="1" fill="#6a6a6a"/><rect x="3" y="2" width="1" height="1" fill="#6a6a6a"/><rect x="0" y="4" width="1" height="1" fill="#6a6a6a"/><rect x="3" y="4" width="1" height="1" fill="#6a6a6a"/><rect x="0" y="6" width="1" height="1" fill="#6a6a6a"/><rect x="3" y="6" width="1" height="1" fill="#6a6a6a"/><rect x="0" y="8" width="1" height="1" fill="#6a6a6a"/><rect x="3" y="8" width="1" height="1" fill="#6a6a6a"/><rect x="0" y="10" width="1" height="1" fill="#6a6a6a"/><rect x="3" y="10" width="1" height="1" fill="#6a6a6a"/><rect x="0" y="12" width="1" height="1" fill="#6a6a6a"/><rect x="3" y="12" width="1" height="1" fill="#6a6a6a"/><rect x="0" y="14" width="1" height="1" fill="#6a6a6a"/><rect x="3" y="14" width="1" height="1" fill="#6a6a6a"/><rect x="0" y="16" width="1" height="1" fill="#6a6a6a"/><rect x="3" y="16" width="1" height="1" fill="#6a6a6a"/><rect x="0" y="18" width="1" height="1" fill="#6a6a6a"/><rect x="3" y="18" width="1" height="1" fill="#6a6a6a"/></svg>
<div class="t" style="left:16.4px;top:639.19px;font-size:8.4px;color:#dedede;font-weight:normal;">MEL</div>
<div class="a" style="left:43.3px;top:634.6px;width:559.7px;height:16.1px;background:#2b2b2b;border-radius:2px"></div>
<svg class="a" style="left:605px;top:637px;" width="3" height="10" viewBox="0 0 3 10"><rect x="1" y="0" width="1" height="1" fill="#666"/><rect x="1" y="2" width="1" height="1" fill="#666"/><rect x="1" y="4" width="1" height="1" fill="#666"/><rect x="1" y="6" width="1" height="1" fill="#666"/><rect x="1" y="8" width="1" height="1" fill="#666"/></svg>
<div class="a" style="left:609.8px;top:634.6px;width:814.4px;height:17.3px;background:#2b2b2b;border-radius:2px"></div>
<svg class="a" style="left:1427px;top:635px;" width="16" height="15" viewBox="0 0 16 15"><rect x="0.8" y="0.8" width="14" height="13.3" fill="#d0d0d0"/><rect x="2" y="3.5" width="11.6" height="9.5" fill="#2b2b2b"/><path d="M5.5 5 Q4 5 4.5 7 Q4.5 8.3 3.5 8.3 Q4.5 8.3 4.5 9.6 Q4 11.6 5.5 11.6 M10.1 5 Q11.6 5 11.1 7 Q11.1 8.3 12.1 8.3 Q11.1 8.3 11.1 9.6 Q11.6 11.6 10.1 11.6" fill="none" stroke="#d0d0d0" stroke-width="0.8"/><rect x="7.4" y="6" width="1" height="1" fill="#d0d0d0"/><rect x="7.4" y="9.5" width="1" height="1.5" fill="#d0d0d0"/></svg>
<div class="a" style="left:0px;top:653.6px;width:1445px;height:4.4px;background:#383838;"></div>
</body></html>
